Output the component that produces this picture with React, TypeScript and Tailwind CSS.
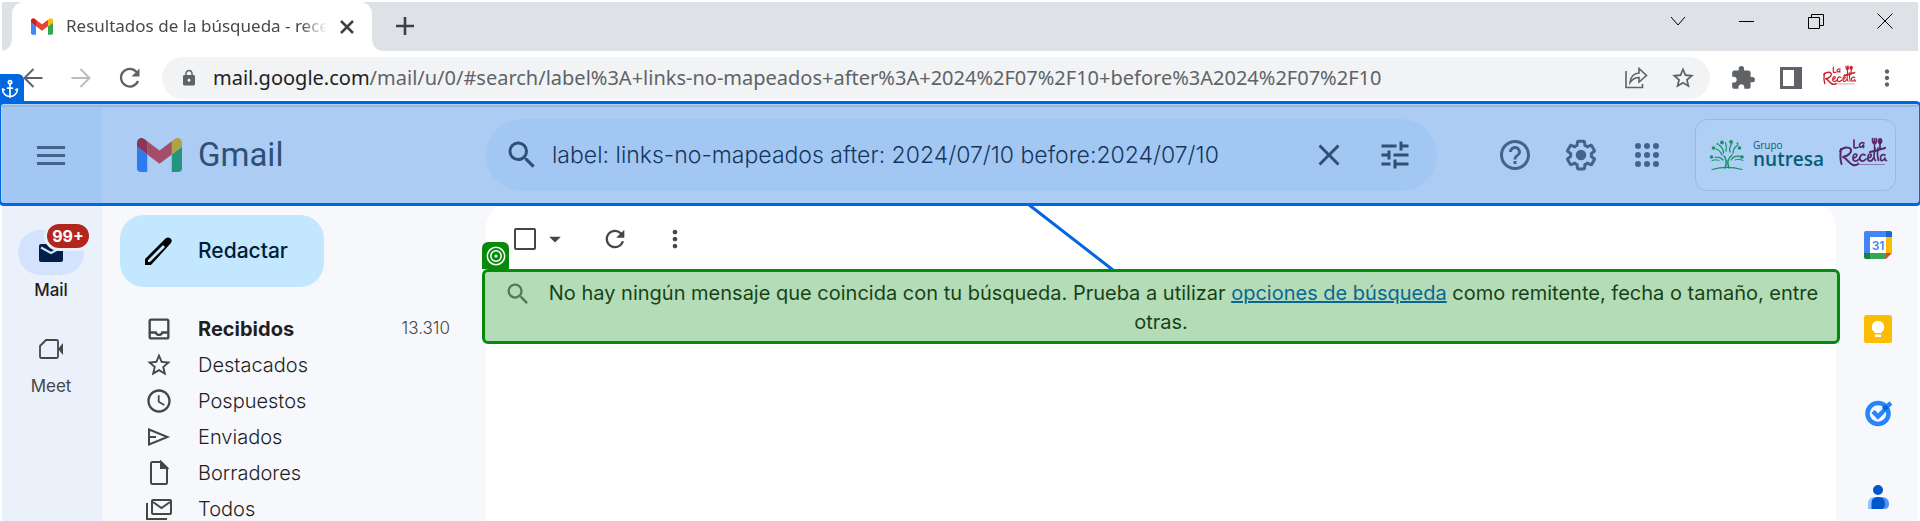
import type { ReactNode } from "react";
import { Anchor } from "lucide-react";
import {
  MdAccessTime,
  MdArrowDropDown,
  MdClose,
  MdExtension,
  MdHelpOutline,
  MdLock,
  MdMoreVert,
  MdOutlineInbox,
  MdRefresh,
  MdSearch,
  MdStarOutline,
  MdTune,
} from "react-icons/md";

function GmailMark({ className }: { className: string }) {
  return (
    <svg viewBox="52 42 88 66" className={className} aria-hidden="true">
      <path fill="#4285f4" d="M58 108h14V74L52 59v43c0 3.32 2.69 6 6 6" />
      <path fill="#34a853" d="M120 108h14c3.32 0 6-2.69 6-6V59l-20 15" />
      <path fill="#fbbc04" d="M120 48v26l20-15v-8c0-7.42-8.47-11.65-14.4-7.2" />
      <path fill="#ea4335" d="M72 74V48l24 18 24-18v26L96 92" />
      <path fill="#c5221f" d="M52 51v8l20 15V48l-5.600-4.200c-5.940-4.450-14.400-.22-14.400 7.200" />
    </svg>
  );
}

function RecetaLogo({ className }: { className: string }) {
  return (
    <svg viewBox="0 0 50 32" className={className} role="img" aria-label="La Receta">
      <g fill="none" stroke="currentColor" strokeLinecap="round" strokeLinejoin="round" strokeWidth="1.7">
        <path d="M16 3v7c0 1 1 1 4 .5" />
        <path d="M26 6c-3-1-5 1-4.500 3s3 1 4-1v2.500" />
        <path d="M3 12c-1 6-1 10 .5 15M2 14c4-5 12-4 11 0-.5 3-4 5-8 6 4 1 5 6 10 8 3 .8 5-.5 5-1.500" strokeWidth="2" />
        <path d="M15 21c4 0 5-4 2.500-4s-4 6-.5 7c2 .3 3-.5 4-2M27 18c-3-2-5.500 1-5 4s4 2.500 6 0M30 21c4-.5 4-4 2-4s-3.500 6-.5 7c2 .3 3-1 4-3M37 11c-1 5-1.500 11 .5 12.500M40 11c-1 6 0 11 .5 12.500M47 18c-3-1.500-5 1-4.500 4s3.500 1.500 4.500-1c0 1.500.5 2.500 1.500 2.500" />
        <path d="M32 15c4-.5 7-1.500 15-4" strokeWidth="2.200" />
        <path d="M36.500 5v7M34.500 1.500v3M36.500 1.500v3M38.500 1.500v3" strokeWidth="1.500" />
        <path d="M15 27.500h32" strokeWidth="1.200" strokeDasharray="1.500 1" opacity="0.5" />
      </g>
      <path fill="currentColor" d="M34 4h5c0 2.500-1 3.500-2.500 3.500S34 6.500 34 4zM42 1c1.700 0 2.600 1.500 2.400 3.500-.2 1.600-.9 2.300-1.600 2.700L43 13h-2l.2-5.800C40.400 6.800 39.700 6 39.700 4.500 39.700 2.500 40.600 1 42 1z" />
    </svg>
  );
}

function NutresaTree() {
  return (
    <svg viewBox="0 0 36 32" className="h-8 w-9 text-[#1fa62a]" aria-hidden="true">
      <g fill="none" stroke="currentColor" strokeLinecap="round">
        <path d="M3 30.500c9-2.500 21-2.500 30 0" strokeWidth="1.200" />
        <path d="M16 29c2-5 1.500-9-1-12M20 29c-2-5-1-10 3-13" strokeWidth="1.500" />
        <path d="M14 21c-2-2.500-5-3.500-8-2.500M13 16c-1-3-3-5-6-6M10 6c3 2 4.500 5 4.500 8M17 12c.8-4 .5-6-.5-8M21 13c-.8-3 0-6 2-9M24 14c0-3 1.500-6 5-8M22 21c2-3 5-4.500 9-3.500" strokeWidth="1.300" />
        <path d="M3 21.500c3-1 5-.8 7 0M26 21c2-1 5-1 8 .5" strokeWidth="1" />
      </g>
      <g fill="currentColor">
        <circle cx="4.500" cy="9" r="1.800" />
        <circle cx="13" cy="3.500" r="1.900" />
        <circle cx="22" cy="2.800" r="1.900" />
        <circle cx="30.500" cy="9" r="1.800" />
        <circle cx="2.500" cy="18" r="1.800" />
        <circle cx="33" cy="18" r="1.800" />
        <circle cx="8.500" cy="5" r="1" />
        <circle cx="28.500" cy="4.500" r="1" />
      </g>
    </svg>
  );
}

function GearIcon() {
  return (
    <svg viewBox="0 0 24 24" className="size-9" fill="currentColor" aria-hidden="true">
      <path d="M13.850 22.250h-3.700c-.74 0-1.360-.54-1.450-1.270l-.27-1.890c-.27-.14-.53-.29-.79-.46l-1.800.72c-.7.26-1.470-.03-1.810-.65L2.200 15.530c-.35-.66-.2-1.440.36-1.880l1.530-1.190c-.01-.15-.02-.3-.02-.46 0-.15.01-.31.02-.46l-1.520-1.190c-.59-.45-.74-1.260-.37-1.880l1.850-3.190c.34-.62 1.110-.9 1.790-.63l1.810.73c.26-.17.52-.32.78-.46l.27-1.910c.09-.7.71-1.250 1.440-1.250h3.700c.74 0 1.360.54 1.450 1.270l.27 1.890c.27.14.53.29.79.46l1.800-.72c.71-.26 1.480.03 1.820.65l1.840 3.180c.36.66.2 1.440-.36 1.880l-1.520 1.190c.01.15.02.3.02.46s-.01.31-.02.46l1.520 1.190c.56.45.72 1.230.37 1.860l-1.860 3.220c-.34.62-1.110.9-1.800.63l-1.800-.72c-.26.17-.52.32-.78.46l-.27 1.910c-.1.68-.72 1.220-1.460 1.220zm-3.230-2h2.760l.37-2.550.53-.22c.44-.18.88-.44 1.340-.78l.45-.34 2.380.96 1.380-2.400-2.030-1.580.07-.56c.03-.26.06-.51.06-.78s-.03-.53-.06-.78l-.07-.56 2.030-1.580-1.390-2.400-2.390.96-.45-.35c-.42-.32-.87-.58-1.330-.77l-.52-.22-.37-2.550h-2.760l-.37 2.550-.53.21c-.44.19-.88.44-1.340.79l-.45.33-2.380-.95-1.390 2.390 2.030 1.580-.07.56a7 7 0 0 0-.06.79c0 .26.02.53.06.78l.07.56-2.030 1.580 1.380 2.400 2.390-.96.45.35c.43.33.86.58 1.330.77l.53.22.38 2.550z" />
      <circle cx="12" cy="12" r="3.500" />
    </svg>
  );
}

function Tab() {
  return (
    <div className="relative flex w-[360px] items-center rounded-t-xl bg-white pl-[19px] pr-4">
      <GmailMark className="h-[17px] w-[22px] shrink-0" />
      <span className="ml-[13px] flex-1 overflow-hidden whitespace-nowrap pb-0.5 font-['Noto_Sans',sans-serif] text-[17px] text-[#45494d] [mask-image:linear-gradient(to_right,black_90%,transparent)]">
        Resultados de la búsqueda - rece
      </span>
      <button aria-label="Cerrar pestaña" className="ml-[11px] text-[#3c4043]">
        <svg viewBox="0 0 18 18" className="size-[18px]" fill="none" stroke="currentColor" strokeWidth="2.500">
          <path d="M3 3l12 12M15 3L3 15" />
        </svg>
      </button>
      <span className="absolute bottom-0 -left-2.5 size-2.5 bg-[radial-gradient(circle_at_0_0,#dee1e6_9px,#fff_10px)]" />
      <span className="absolute bottom-0 -right-2.5 size-2.5 bg-[radial-gradient(circle_at_100%_0,#dee1e6_9px,#fff_10px)]" />
    </div>
  );
}

function TabStrip() {
  const control = "flex h-8 w-9 items-center justify-center";
  return (
    <div className="flex h-[49px] bg-[#dee1e6] pl-[10px] text-black">
      <Tab />
      <button aria-label="Nueva pestaña" className="ml-[23px] pb-0.5 text-[#3c4043]">
        <svg viewBox="0 0 20 20" className="size-5" stroke="currentColor" strokeWidth="2.600">
          <path d="M1 10h18M10 1v18" />
        </svg>
      </button>
      <div className="ml-auto flex items-start gap-[33px] pr-[15px] pt-[3px]">
        <button aria-label="Buscar pestañas" className={control}>
          <svg viewBox="0 0 16 16" className="size-4" fill="none" stroke="currentColor"><path d="M1 4l7 8 7-8" /></svg>
        </button>
        <button aria-label="Minimizar" className={control}>
          <svg viewBox="0 0 16 16" className="size-4" fill="none" stroke="currentColor"><path d="M0 8.500h15" /></svg>
        </button>
        <button aria-label="Restaurar" className={control}>
          <svg viewBox="0 0 16 16" className="size-4" fill="none" stroke="currentColor"><path d="M.5 4.500h11v11H.5zM3.500 4.500v-3h12v11h-4" /></svg>
        </button>
        <button aria-label="Cerrar" className={control}>
          <svg viewBox="0 0 16 16" className="size-4" fill="none" stroke="currentColor"><path d="M.5.5l15 15M15.500.5l-15 15" /></svg>
        </button>
      </div>
    </div>
  );
}

function Arrow({ flip }: { flip?: boolean }) {
  return (
    <svg viewBox="0 0 20 20" className={flip ? "size-5 rotate-180" : "size-5"} fill="none" stroke="currentColor" strokeWidth="2">
      <path d="M19.500 10H2M10.500 1L1.500 10l9 9" />
    </svg>
  );
}

function AddressBar() {
  return (
    <div className="flex h-[54px] items-start bg-white pl-[21px] pr-[18px] pt-[6px] font-['Noto_Sans',sans-serif] text-[#5f6368]">
      <div className="flex h-[42px] w-[139px] shrink-0 items-center gap-7">
        <button aria-label="Atrás"><Arrow /></button>
        <button aria-label="Adelante" className="text-[#babcbe]"><Arrow flip /></button>
        <button aria-label="Actualizar">
          <svg viewBox="0 0 22 22" className="size-[22px]" fill="none" stroke="currentColor" strokeWidth="2.300">
            <path d="M19 14a8.800 8.800 0 1 1-1.500-9" />
            <path d="M20.500 1.500v8h-8z" fill="currentColor" stroke="none" />
          </svg>
        </button>
      </div>
      <div className="flex h-[42px] min-w-0 flex-1 items-center rounded-full bg-[#f1f3f4] pl-[18px] pr-[14px]">
        <MdLock className="size-[18px] shrink-0" />
        <a href="#search" className="ml-[15px] flex-1 truncate text-xl">
          <span className="text-[#202124]">mail.google.com</span>
          /mail/u/0/#search/label%3A+links-no-mapeados+after%3A+2024%2F07%2F10+before%3A2024%2F07%2F10
        </a>
        <button aria-label="Compartir" className="mr-[22px]">
          <svg viewBox="0 0 24 22" className="h-[22px] w-6" fill="none" stroke="currentColor" strokeWidth="1.600">
            <path d="M2 4v16.500h16.500V17" />
            <path d="M6 15.500C6.500 9.500 10 6.500 15 6V1.500l7.500 7-7.500 6.500v-4.500c-4 0-6.500 1.500-9 5z" />
          </svg>
        </button>
        <button aria-label="Añadir a marcadores"><MdStarOutline className="size-[26px]" /></button>
      </div>
      <div className="ml-5 flex h-[42px] items-center">
        <button aria-label="Extensiones"><MdExtension className="size-[26px]" /></button>
        <button aria-label="Panel lateral" className="ml-6">
          <svg viewBox="0 0 22 22" className="size-[22px]" fill="currentColor">
            <path fillRule="evenodd" d="M0 0h22v22H0zM3 3v16h11V3z" />
          </svg>
        </button>
        <button aria-label="Perfil" className="ml-5 pb-1 text-[#c8202e]"><RecetaLogo className="h-[22px] w-[35px]" /></button>
        <button aria-label="Más" className="ml-[17px]"><MdMoreVert className="size-[26px]" /></button>
      </div>
    </div>
  );
}

function Header() {
  return (
    <header className="relative z-10 flex h-24 items-center text-[#5f6368]">
      <div className="flex h-full w-[100px] shrink-0 items-center justify-center bg-[#eaf1fb] pr-0.5">
        <button aria-label="Menú principal">
          <svg viewBox="0 0 28 20" className="h-5 w-7" stroke="currentColor" strokeWidth="3">
            <path d="M0 2.500h28M0 10.500h28M0 18.500h28" />
          </svg>
        </button>
      </div>
      <a href="#inbox" className="flex w-[384px] shrink-0 items-center gap-4 pl-[35px]">
        <GmailMark className="h-[34px] w-[45px]" />
        <span className="font-['Roboto',sans-serif] text-[33px] leading-9 text-[#444746]">Gmail</span>
      </a>
      <form className="flex h-[72px] max-w-[951px] flex-1 items-center rounded-full bg-[#eaf1fb] pl-[18px] pr-6 text-[#444746]">
        <button type="button" aria-label="Buscar"><MdSearch className="size-9" /></button>
        <input
          aria-label="Buscar correo"
          defaultValue="label: links-no-mapeados after: 2024/07/10 before:2024/07/10"
          className="ml-3 min-w-0 flex-1 bg-transparent text-[23px] font-light text-[#1f1f1f] outline-none"
        />
        <button type="button" aria-label="Borrar búsqueda"><MdClose className="size-9" /></button>
        <button type="button" aria-label="Opciones de búsqueda" className="ml-[30px]"><MdTune className="size-9" /></button>
      </form>
      <div className="ml-auto flex items-center pr-[22px]">
        <button aria-label="Asistencia"><MdHelpOutline className="size-9" /></button>
        <button aria-label="Configuración" className="ml-[30px]"><GearIcon /></button>
        <button aria-label="Aplicaciones de Google" className="ml-[30px]">
          <svg viewBox="0 0 24 24" className="size-9" fill="currentColor">
            {[6, 12, 18].map((y) => [6, 12, 18].map((x) => <circle key={`${x}-${y}`} cx={x} cy={y} r="2" />))}
          </svg>
        </button>
        <button aria-label="Cuenta" className="ml-[30px] flex h-[72px] w-[201px] items-center rounded-xl border border-[#d9dde3] bg-white/50 pl-[13px]">
          <NutresaTree />
          <span className="ml-2 flex flex-col text-left font-['Open_Sans',sans-serif] text-[#0b5a44]">
            <span className="text-[10px] leading-3">Grupo</span>
            <span className="pb-1 text-[19px] font-semibold leading-4">nutresa</span>
          </span>
          <RecetaLogo className="mb-1 ml-[14px] h-8 w-[50px] shrink-0 text-[#7b0f33]" />
        </button>
      </div>
      <div className="pointer-events-none absolute -inset-x-1 -bottom-[3px] -top-[6px] rounded-md border-[3px] border-[#0067e0] bg-[#0067e0]/30 bg-clip-padding" />
      <div className="absolute -left-0.5 -top-[33px] flex h-[30px] w-6 items-center rounded-tr-md bg-[#0067e0] text-white">
        <Anchor className="size-5" strokeWidth={2} />
      </div>
    </header>
  );
}

function AppRail() {
  return (
    <nav className="flex w-[100px] shrink-0 flex-col items-center bg-[#eaf1fb] pr-0.5 pt-[27px] text-[17px] leading-5 text-[#444746]">
      <a href="#mail" className="flex flex-col items-center text-[#1f1f1f]">
        <span className="relative flex h-[45px] w-[66px] items-center justify-center rounded-full bg-[#d3e3fd]">
          <svg viewBox="0 0 24 18" className="h-[18px] w-6">
            <rect width="24" height="18" rx="2" fill="#041e49" />
            <path d="M2 3.500l10 5.500 10-5.500" fill="none" stroke="#d3e3fd" strokeWidth="2" />
          </svg>
          <span className="absolute -right-[5px] -top-[6px] flex h-6 w-[42px] items-center justify-center rounded-full bg-[#b3261e] text-base font-bold leading-6 text-white ring-3 ring-[#eaf1fb]">
            99+
          </span>
        </span>
        <span className="mt-[5px] font-medium">Mail</span>
      </a>
      <a href="#meet" className="mt-[39px] flex flex-col items-center">
        <svg viewBox="0 0 24 20" className="h-5 w-6" fill="none" stroke="currentColor" strokeWidth="1.800">
          <path d="M7 1h10.500q1.500 0 1.500 1.500v15q0 1.500-1.500 1.500h-15Q1 19 1 17.500V7z" strokeLinejoin="round" />
          <path d="M19 10l5-6v12z" fill="currentColor" stroke="none" />
        </svg>
        <span className="mt-[17px]">Meet</span>
      </a>
    </nav>
  );
}

const folders: { label: string; icon: ReactNode; count?: string }[] = [
  { label: "Recibidos", icon: <MdOutlineInbox className="size-7" />, count: "13.310" },
  { label: "Destacados", icon: <MdStarOutline className="size-7" /> },
  { label: "Pospuestos", icon: <MdAccessTime className="size-7" /> },
  {
    label: "Enviados",
    icon: (
      <svg viewBox="0 0 24 20" className="h-5 w-6" fill="none" stroke="currentColor" strokeWidth="2">
        <path d="M2 2.500L20.500 10 2 17.500zM2 10h7" />
      </svg>
    ),
  },
  {
    label: "Borradores",
    icon: (
      <svg viewBox="0 0 20 26" className="h-[26px] w-5" fill="none" stroke="currentColor" strokeWidth="2">
        <path d="M3.500 2H12l6 6v14.500q0 1.500-1.500 1.500h-13Q2 24 2 22.500v-19Q2 2 3.500 2z" />
        <path d="M12 2v6h6z" fill="currentColor" />
      </svg>
    ),
  },
  {
    label: "Todos",
    icon: (
      <svg viewBox="0 0 26 22" className="h-[22px] w-[26px]" fill="none" stroke="currentColor" strokeWidth="2">
        <rect x="6" y="2" width="19" height="14" rx="1" />
        <path d="M7 4l8.500 6L24 4M1 5v16h20" />
      </svg>
    ),
  },
];

function Sidebar() {
  return (
    <aside className="w-[384px] shrink-0 pr-9 pt-3">
      <button className="ml-[18px] flex h-[72px] w-[204px] items-center rounded-3xl bg-[#c2e7ff] pl-[25px] text-[21px] font-medium text-[#001d35]">
        <svg viewBox="0 0 28 28" className="size-7" aria-hidden="true">
          <path fillRule="evenodd" d="M0 28v-6L20.500 1.500q2.500-2 5 0t0 5L6 28zM3 25h2L20 10l-2-2L3 23z" />
        </svg>
        <span className="ml-[25px]">Redactar</span>
      </button>
      <ul className="mt-6 text-xl text-[#1f1f1f]">
        {folders.map((f) => (
          <li key={f.label}>
            <a href={`#${f.label}`} className="flex h-9 items-center pl-[43px]">
              <span className="flex w-7 justify-center text-[#444746]">{f.icon}</span>
              <span className={f.count ? "ml-[25px] flex-1 font-bold" : "ml-[25px] flex-1 font-light"}>{f.label}</span>
              {f.count && <span className="text-[17px] font-light text-[#444746]">{f.count}</span>}
            </a>
          </li>
        ))}
      </ul>
    </aside>
  );
}

function Results() {
  return (
    <main className="relative min-w-0 flex-1 rounded-t-3xl bg-white">
      <svg viewBox="0 0 88 70" className="absolute left-[542px] top-[1px] h-[70px] w-[88px]" fill="none" stroke="#0067e0" strokeWidth="3">
        <path d="M0 0l85 66" />
      </svg>
      <div className="flex h-[69px] items-center pl-[28px] pt-[3px] text-[#444746]">
        <input type="checkbox" aria-label="Seleccionar" className="size-[22px] appearance-none rounded-xs border-2 border-[#444746]" />
        <button aria-label="Tipos de selección" className="ml-[5px]"><MdArrowDropDown className="size-7" /></button>
        <button aria-label="Actualizar" className="ml-[32px]"><MdRefresh className="size-7" /></button>
        <button aria-label="Más opciones" className="ml-[32px]"><MdMoreVert className="size-7" /></button>
      </div>
      <div className="relative h-[69px] px-[15px] pt-[7px] text-center text-xl leading-7 text-[#1f1f1f]">
        <p>
          <MdSearch className="mr-[17px] inline size-7 align-[-8px] text-[#72756f]" />
          No hay ningún mensaje que coincida con tu búsqueda. Prueba a utilizar{" "}
          <a href="#opciones" className="text-[#0b57d0] underline">opciones de búsqueda</a> como remitente, fecha o tamaño, entre otras.
        </p>
        <div className="pointer-events-none absolute -inset-x-1 -inset-y-[3px] rounded-md border-[3px] border-[#078a0c] bg-[#078a0c]/30 bg-clip-padding" />
        <div className="absolute -left-1 -top-[30px] flex size-[27px] items-center justify-center rounded-t-md bg-[#078a0c] text-white">
          <svg viewBox="0 0 20 20" className="size-5" fill="none" stroke="currentColor" strokeWidth="1.500">
            <circle cx="10" cy="10" r="8.700" />
            <circle cx="10" cy="10" r="5.200" />
            <circle cx="10" cy="10" r="1.600" fill="currentColor" stroke="none" />
          </svg>
        </div>
      </div>
    </main>
  );
}

function SidePanel() {
  return (
    <aside className="flex w-[82px] shrink-0 flex-col items-center gap-14 pl-0.5 pt-7">
      <a href="#calendar" aria-label="Calendar">
        <svg viewBox="0 0 28 28" className="size-7">
          <path fill="#fff" d="M6 6h16v16H6z" />
          <path fill="#4285f4" d="M2 0h20v6H6v16H0V2q0-2 2-2z" />
          <path fill="#1967d2" d="M22 0h4q2 0 2 2v4h-6z" />
          <path fill="#fbbc04" d="M22 6h6v16h-6z" />
          <path fill="#188038" d="M0 22h6v6H2q-2 0-2-2z" />
          <path fill="#34a853" d="M6 22h16v6H6z" />
          <path fill="#ea4335" d="M22 22h6l-6 6z" />
          <text x="14" y="19" textAnchor="middle" fontFamily="Inter, sans-serif" fontSize="12" fontWeight="600" fill="#4285f4">31</text>
        </svg>
      </a>
      <a href="#keep" aria-label="Keep">
        <svg viewBox="0 0 28 28" className="size-7">
          <rect width="28" height="28" rx="2.500" fill="#fbbc04" />
          <path fill="#fff" d="M14 6a6 6 0 0 1 3.500 11v1h-7v-1A6 6 0 0 1 14 6zM11 19.500h6V22h-6z" />
        </svg>
      </a>
      <a href="#tasks" aria-label="Tasks">
        <svg viewBox="0 0 28 28" className="size-7" fill="none">
          <circle cx="14" cy="14.500" r="10.500" stroke="#2684fc" strokeWidth="4.500" />
          <path d="M9 12.500l5 5 6.500-6.500" stroke="#2684fc" strokeWidth="4.500" />
          <path d="M19.500 10.500l4-3.500" stroke="#0066da" strokeWidth="4.500" />
          <path d="M23.500 7L27 4" stroke="#2684fc" strokeWidth="4.500" />
        </svg>
      </a>
      <a href="#contacts" aria-label="Contactos">
        <svg viewBox="0 0 28 28" className="size-7">
          <path fill="#91bfff" d="M4 26v-5q0-7 7-7h6v12z" />
          <path fill="#5290f5" d="M12 14h5q8 0 8 7 0 5-5 5h-8z" />
          <path fill="#0057cc" d="M7.500 26v-6q0-6 6.500-6t7 6q0 6-4 6z" />
          <circle cx="14" cy="7" r="5" fill="#0057cc" />
        </svg>
      </a>
    </aside>
  );
}

export default function App() {
  return (
    <div className="min-h-screen overflow-hidden bg-white px-0.5 pt-0.5 font-['Inter',sans-serif]">
      <div className="flex min-h-[519px] flex-col">
        <TabStrip />
        <AddressBar />
        <div className="flex flex-1 flex-col border-t-2 border-[#dadce0] bg-[#f6f8fc]">
          <Header />
          <div className="flex flex-1">
            <AppRail />
            <Sidebar />
            <Results />
            <SidePanel />
          </div>
        </div>
      </div>
    </div>
  );
}
